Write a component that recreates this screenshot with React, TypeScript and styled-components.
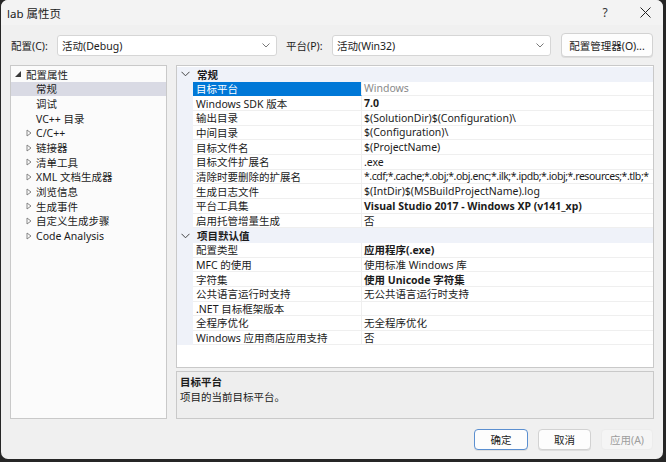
import React from "react";
import styled, { createGlobalStyle } from "styled-components";

const GlobalStyle = createGlobalStyle`
  html, body { margin: 0; padding: 0; background: #262626; }
  body {
    font-family: "Noto Sans", "Noto Sans CJK SC", sans-serif;
    font-size: 10.5px;
    color: #1b1b1b;
  }
  * { box-sizing: border-box; }
`;

const Window = styled.div`
  width: 662px;
  height: 459px;
  margin-left: 1px;
  background: #f0f0f0;
  border-radius: 7px;
  overflow: hidden;
  display: flex;
  flex-direction: column;
`;

const TitleBar = styled.div`
  height: 25px;
  display: flex;
  align-items: center;
  padding-left: 6px;
  background: #f3f3f3;
`;

const Title = styled.div`
  flex: 1;
  font-size: 11.5px;
  color: #1a1a1a;
`;

const TitleButton = styled.div<{ $w: number }>`
  width: ${(p) => p.$w}px;
  height: 25px;
  display: flex;
  align-items: center;
  justify-content: center;
  color: #333;
  font-size: 12px;
`;

const Body = styled.div`
  flex: 1;
  display: flex;
  flex-direction: column;
  padding: 0 9px;
`;

const ConfigRow = styled.div`
  margin-top: 8px;
  height: 24px;
  display: flex;
  align-items: center;
`;

const Label = styled.div<{ $ml?: number }>`
  width: 47px;
  margin-left: ${(p) => p.$ml ?? 0}px;
  white-space: nowrap;
  padding-left: 1px;
`;

const Combo = styled.div<{ $w: number }>`
  width: ${(p) => p.$w}px;
  height: 21px;
  background: #ffffff;
  border: 1px solid #d6d6d6;
  border-radius: 3px;
  display: flex;
  align-items: center;
  padding: 0 6px 0 4px;
`;

const ComboText = styled.div`
  flex: 1;
  white-space: nowrap;
`;

const Button = styled.div<{ $w: number; $default?: boolean; $disabled?: boolean }>`
  width: ${(p) => p.$w}px;
  height: ${(p) => (p.$default !== undefined ? 21 : 24)}px;
  border-radius: 4px;
  display: flex;
  align-items: center;
  justify-content: center;
  white-space: nowrap;
  background: ${(p) => (p.$disabled ? "#f5f5f5" : "#fdfdfd")};
  color: ${(p) => (p.$disabled ? "#9d9d9d" : "#1b1b1b")};
  border: 1px solid
    ${(p) => (p.$default ? "#5b8fd0" : p.$disabled ? "#ececec" : "#d2d2d2")};
  box-shadow: ${(p) => (p.$disabled ? "none" : "0 1px 0 rgba(0,0,0,0.08)")};
`;

const ManagerButton = styled(Button)`
  margin-left: 10px;
`;

const Main = styled.div`
  margin-top: 8px;
  height: 354px;
  display: flex;
  gap: 9px;
`;

const Tree = styled.div`
  width: 157px;
  background: #fbfbfb;
  border: 1px solid #c9c9c9;
  padding-top: 1px;
`;

const TreeRow = styled.div<{ $level: number; $selected?: boolean }>`
  height: 14.67px;
  display: flex;
  align-items: center;
  padding-left: ${(p) => (p.$level === 0 ? 4 : 15)}px;
  background: ${(p) => (p.$selected ? "#d9dae4" : "transparent")};
  white-space: nowrap;
`;

const Expander = styled.div<{ $w: number }>`
  width: ${(p) => p.$w}px;
  display: flex;
  align-items: center;
`;

const RightColumn = styled.div`
  width: 478px;
  display: flex;
  flex-direction: column;
  gap: 3px;
`;

const Grid = styled.div`
  height: 303px;
  background: #ffffff;
  border: 1px solid #c9c9c9;
  padding-top: 1px;
  overflow: hidden;
`;

const CategoryRow = styled.div`
  height: 14.67px;
  display: flex;
  align-items: center;
  background: #eff2f9;
  font-weight: 700;
`;

const CategoryLabel = styled.span`
  padding-left: 4px;
`;

const Gutter = styled.div`
  width: 16px;
  flex: none;
  align-self: stretch;
  display: flex;
  align-items: center;
  justify-content: center;
  background: #eff2f9;
`;

const PropRow = styled.div`
  height: 14.67px;
  display: flex;
`;

const NameCell = styled.div<{ $selected?: boolean }>`
  width: 169px;
  flex: none;
  padding-left: 3px;
  display: flex;
  align-items: center;
  white-space: nowrap;
  overflow: hidden;
  background: ${(p) => (p.$selected ? "#0078d7" : "transparent")};
  color: ${(p) => (p.$selected ? "#ffffff" : "#1b1b1b")};
  border-bottom: 1px solid ${(p) => (p.$selected ? "#0078d7" : "#efefef")};
  border-right: 1px solid #efefef;
`;

const ValueCell = styled.div<{ $bold?: boolean; $muted?: boolean; $tight?: boolean }>`
  flex: 1;
  min-width: 0;
  padding-left: 2px;
  display: flex;
  align-items: center;
  white-space: nowrap;
  overflow: hidden;
  letter-spacing: ${(p) => (p.$tight ? "-0.45px" : "normal")};
  font-weight: ${(p) => (p.$bold ? 700 : 400)};
  color: ${(p) => (p.$muted ? "#8a8a8a" : "#1b1b1b")};
  border-bottom: 1px solid #efefef;
`;

const Desc = styled.div`
  height: 48px;
  background: #eeeeee;
  border: 1px solid #c9c9c9;
  padding: 3px 3px;
  line-height: 15px;
`;

const DescTitle = styled.div`
  font-weight: 700;
`;

const Footer = styled.div`
  margin-top: 10px;
  display: flex;
  justify-content: flex-end;
  gap: 10px;
  padding-right: 1px;
`;

const Chevron = () => (
  <svg width="8" height="5" viewBox="0 0 8 5">
    <polyline points="0.5,0.5 4,4 7.5,0.5" fill="none" stroke="#6a6a6a" strokeWidth="0.9" />
  </svg>
);

const CatChevron = () => (
  <svg width="9" height="6" viewBox="0 0 9 6">
    <polyline points="0.5,0.8 4.5,4.8 8.5,0.8" fill="none" stroke="#444" strokeWidth="1" />
  </svg>
);

const ExpandedArrow = () => (
  <svg width="6" height="6" viewBox="0 0 6 6">
    <polygon points="6,0 6,6 0,6" fill="#3a3a3a" />
  </svg>
);

const CollapsedArrow = () => (
  <svg width="6" height="8" viewBox="0 0 6 8">
    <polygon points="1,1 5,4 1,7" fill="none" stroke="#7a7a7a" strokeWidth="0.9" />
  </svg>
);

const CloseIcon = () => (
  <svg width="11" height="11" viewBox="0 0 11 11">
    <line x1="0.5" y1="0.5" x2="10.5" y2="10.5" stroke="#222" strokeWidth="1" />
    <line x1="10.5" y1="0.5" x2="0.5" y2="10.5" stroke="#222" strokeWidth="1" />
  </svg>
);

type Prop = {
  name: string;
  value: string;
  bold?: boolean;
  muted?: boolean;
  selected?: boolean;
  tight?: boolean;
};

const general: Prop[] = [
  { name: "目标平台", value: "Windows", muted: true, selected: true },
  { name: "Windows SDK 版本", value: "7.0", bold: true },
  { name: "输出目录", value: "$(SolutionDir)$(Configuration)\\" },
  { name: "中间目录", value: "$(Configuration)\\" },
  { name: "目标文件名", value: "$(ProjectName)" },
  { name: "目标文件扩展名", value: ".exe" },
  {
    name: "清除时要删除的扩展名",
    value: "*.cdf;*.cache;*.obj;*.obj.enc;*.ilk;*.ipdb;*.iobj;*.resources;*.tlb;*",
    tight: true,
  },
  { name: "生成日志文件", value: "$(IntDir)$(MSBuildProjectName).log" },
  { name: "平台工具集", value: "Visual Studio 2017 - Windows XP (v141_xp)", bold: true },
  { name: "启用托管增量生成", value: "否" },
];

const defaults: Prop[] = [
  { name: "配置类型", value: "应用程序(.exe)", bold: true },
  { name: "MFC 的使用", value: "使用标准 Windows 库" },
  { name: "字符集", value: "使用 Unicode 字符集", bold: true },
  { name: "公共语言运行时支持", value: "无公共语言运行时支持" },
  { name: ".NET 目标框架版本", value: "" },
  { name: "全程序优化", value: "无全程序优化" },
  { name: "Windows 应用商店应用支持", value: "否" },
];

const treeChildren: { label: string; expandable: boolean; selected?: boolean }[] = [
  { label: "常规", expandable: false, selected: true },
  { label: "调试", expandable: false },
  { label: "VC++ 目录", expandable: false },
  { label: "C/C++", expandable: true },
  { label: "链接器", expandable: true },
  { label: "清单工具", expandable: true },
  { label: "XML 文档生成器", expandable: true },
  { label: "浏览信息", expandable: true },
  { label: "生成事件", expandable: true },
  { label: "自定义生成步骤", expandable: true },
  { label: "Code Analysis", expandable: true },
];

const PropRows = ({ items }: { items: Prop[] }) => (
  <>
    {items.map((p) => (
      <PropRow key={p.name}>
        <Gutter />
        <NameCell $selected={p.selected}>{p.name}</NameCell>
        <ValueCell $bold={p.bold} $muted={p.muted} $tight={p.tight}>
          {p.value}
        </ValueCell>
      </PropRow>
    ))}
  </>
);

export default function App() {
  return (
    <>
      <GlobalStyle />
      <Window>
        <TitleBar>
          <Title>lab 属性页</Title>
          <TitleButton $w={46}>?</TitleButton>
          <TitleButton $w={35}>
            <CloseIcon />
          </TitleButton>
        </TitleBar>
        <Body>
          <ConfigRow>
            <Label>配置(C):</Label>
            <Combo $w={220}>
              <ComboText>活动(Debug)</ComboText>
              <Chevron />
            </Combo>
            <Label $ml={8}>平台(P):</Label>
            <Combo $w={219}>
              <ComboText>活动(Win32)</ComboText>
              <Chevron />
            </Combo>
            <ManagerButton $w={92}>配置管理器(O)...</ManagerButton>
          </ConfigRow>
          <Main>
            <Tree>
              <TreeRow $level={0}>
                <Expander $w={11}>
                  <ExpandedArrow />
                </Expander>
                配置属性
              </TreeRow>
              {treeChildren.map((c) => (
                <TreeRow key={c.label} $level={1} $selected={c.selected}>
                  <Expander $w={10}>{c.expandable ? <CollapsedArrow /> : null}</Expander>
                  {c.label}
                </TreeRow>
              ))}
            </Tree>
            <RightColumn>
              <Grid>
                <CategoryRow>
                  <Gutter>
                    <CatChevron />
                  </Gutter>
                  <CategoryLabel>常规</CategoryLabel>
                </CategoryRow>
                <PropRows items={general} />
                <CategoryRow>
                  <Gutter>
                    <CatChevron />
                  </Gutter>
                  <CategoryLabel>项目默认值</CategoryLabel>
                </CategoryRow>
                <PropRows items={defaults} />
              </Grid>
              <Desc>
                <DescTitle>目标平台</DescTitle>
                <div>项目的当前目标平台。</div>
              </Desc>
            </RightColumn>
          </Main>
          <Footer>
            <Button $w={54} $default>
              确定
            </Button>
            <Button $w={53} $default={false}>
              取消
            </Button>
            <Button $w={52} $default={false} $disabled>
              应用(A)
            </Button>
          </Footer>
        </Body>
      </Window>
    </>
  );
}
